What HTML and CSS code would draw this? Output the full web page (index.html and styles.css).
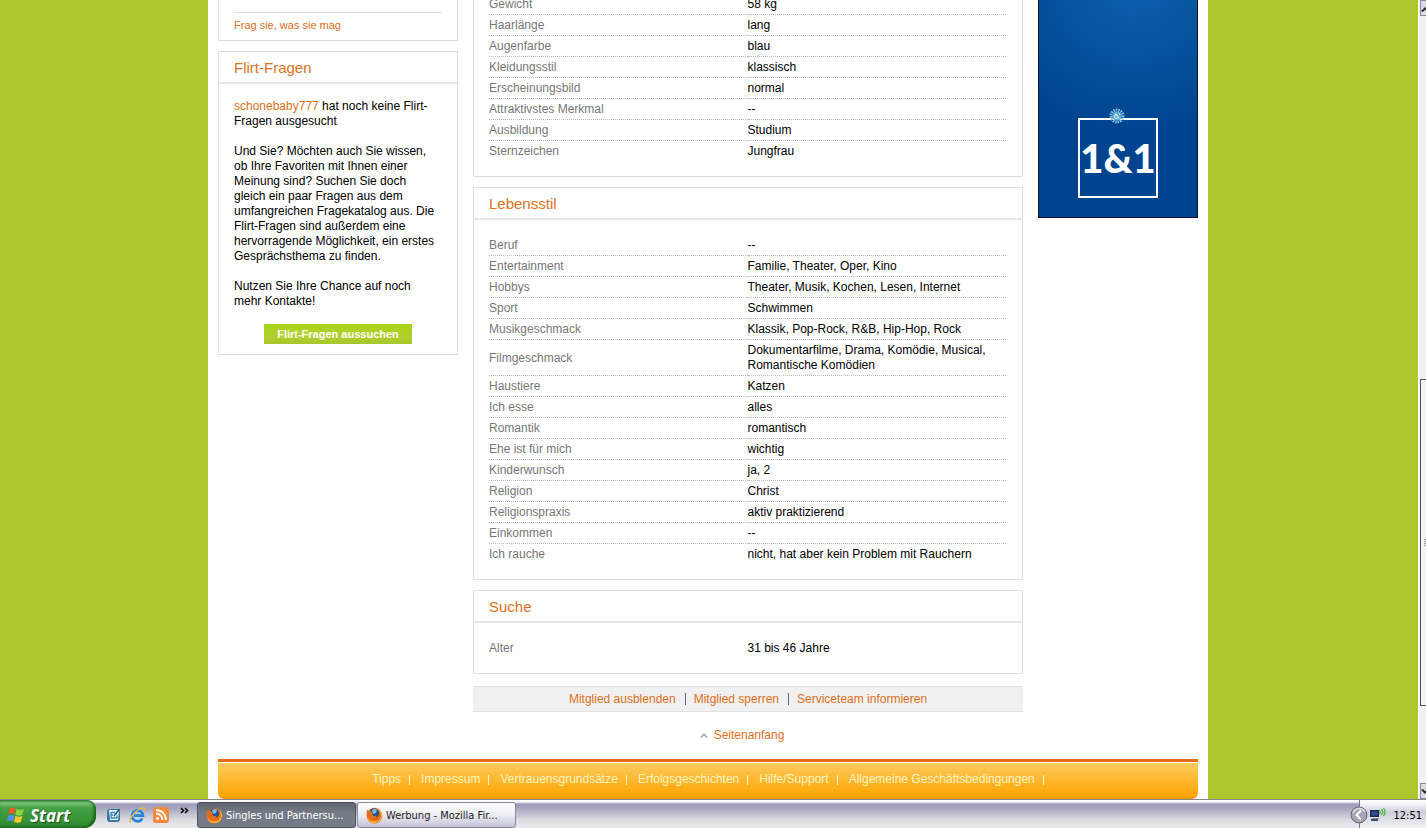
FILE: index.html
```html
<!DOCTYPE html>
<html lang="de">
<head>
    <meta charset="UTF-8">
    <meta name="viewport" content="width=device-width, initial-scale=1.0">
    <title>Singles und Partnersuche</title>
    <link rel="stylesheet" href="styles.css">
</head>
<body>
    <div class="viewport">
        <div class="canvas">
            <div class="page">
                <div class="columns">
                    <aside class="sidebar">
                        <div class="box box-questions">
                            <p class="ask"><a href="#">Frag sie, was sie mag</a></p>
                        </div>
                        <div class="box">
                            <h2>Flirt-Fragen</h2>
                            <div class="box-text">
                                <p><a href="#">schonebaby777</a> hat noch keine Flirt-Fragen ausgesucht</p>
                                <p>Und Sie? Möchten auch Sie wissen, ob Ihre Favoriten mit Ihnen einer Meinung sind? Suchen Sie doch gleich ein paar Fragen aus dem umfangreichen Fragekatalog aus. Die Flirt-Fragen sind außerdem eine hervorragende Möglichkeit, ein erstes Gesprächsthema zu finden.</p>
                                <p>Nutzen Sie Ihre Chance auf noch mehr Kontakte!</p>
                                <button class="btn" type="button">Flirt-Fragen aussuchen</button>
                            </div>
                        </div>
                    </aside>

                    <main class="content">
                        <section class="box">
                            <table class="facts">
                                <tr><th>Gewicht</th><td>58 kg</td></tr>
                                <tr><th>Haarlänge</th><td>lang</td></tr>
                                <tr><th>Augenfarbe</th><td>blau</td></tr>
                                <tr><th>Kleidungsstil</th><td>klassisch</td></tr>
                                <tr><th>Erscheinungsbild</th><td>normal</td></tr>
                                <tr><th>Attraktivstes Merkmal</th><td>--</td></tr>
                                <tr><th>Ausbildung</th><td>Studium</td></tr>
                                <tr><th>Sternzeichen</th><td>Jungfrau</td></tr>
                            </table>
                        </section>

                        <section class="box">
                            <h2>Lebensstil</h2>
                            <table class="facts">
                                <tr><th>Beruf</th><td>--</td></tr>
                                <tr><th>Entertainment</th><td>Familie, Theater, Oper, Kino</td></tr>
                                <tr><th>Hobbys</th><td>Theater, Musik, Kochen, Lesen, Internet</td></tr>
                                <tr><th>Sport</th><td>Schwimmen</td></tr>
                                <tr><th>Musikgeschmack</th><td>Klassik, Pop-Rock, R&amp;B, Hip-Hop, Rock</td></tr>
                                <tr><th>Filmgeschmack</th><td>Dokumentarfilme, Drama, Komödie, Musical, Romantische Komödien</td></tr>
                                <tr><th>Haustiere</th><td>Katzen</td></tr>
                                <tr><th>Ich esse</th><td>alles</td></tr>
                                <tr><th>Romantik</th><td>romantisch</td></tr>
                                <tr><th>Ehe ist für mich</th><td>wichtig</td></tr>
                                <tr><th>Kinderwunsch</th><td>ja, 2</td></tr>
                                <tr><th>Religion</th><td>Christ</td></tr>
                                <tr><th>Religionspraxis</th><td>aktiv praktizierend</td></tr>
                                <tr><th>Einkommen</th><td>--</td></tr>
                                <tr><th>Ich rauche</th><td>nicht, hat aber kein Problem mit Rauchern</td></tr>
                            </table>
                        </section>

                        <section class="box">
                            <h2>Suche</h2>
                            <table class="facts">
                                <tr><th>Alter</th><td>31 bis 46 Jahre</td></tr>
                            </table>
                        </section>

                        <div class="actions">
                            <a href="#">Mitglied ausblenden</a>
                            <a href="#">Mitglied sperren</a>
                            <a href="#">Serviceteam informieren</a>
                        </div>
                        <p class="to-top">
                            <svg width="8" height="5" viewBox="0 0 8 5"><path d="M1 4.5 4 1.2 7 4.5" fill="none" stroke="#a8a8a8" stroke-width="1.6"/></svg>
                            <a href="#">Seitenanfang</a>
                        </p>
                    </main>

                    <a class="ad" href="#">
                        <span class="ad-logo">1&amp;1
                            <svg class="ad-spark" width="16" height="16" viewBox="0 0 16 16">
                                <circle cx="8" cy="8" r="6" fill="none" stroke="#8cc4dc" stroke-width="3" stroke-dasharray="1.4 1"/>
                                <circle cx="8" cy="8" r="4.6" fill="#5fb2d6"/>
                                <path d="M5 9.5 7 6l2 2 2-2.500M6.500 10.500l3.500-1" fill="none" stroke="#d4f3f8" stroke-width="1.200"/>
                                <path d="M8 5.500 10.500 8" stroke="#176fa5" stroke-width="1"/>
                            </svg>
                        </span>
                    </a>
                </div>

                <footer class="footer">
                    <nav>
                        <a href="#">Tipps</a>
                        <a href="#">Impressum</a>
                        <a href="#">Vertrauensgrundsätze</a>
                        <a href="#">Erfolgsgeschichten</a>
                        <a href="#">Hilfe/Support</a>
                        <a href="#">Allgemeine Geschäftsbedingungen</a>
                    </nav>
                </footer>
            </div>
        </div>

        <div class="scrollbar">
            <div class="scroll-btn"><svg width="6" height="6" viewBox="0 0 6 6"><path d="M0 5 4 1l2 2v2L4 4 2 6z" fill="#333"/></svg></div>
            <div class="track-above"></div>
            <div class="thumb"><span></span><span></span><span></span><span></span></div>
            <div class="track-below"></div>
            <div class="scroll-btn"><svg width="6" height="6" viewBox="0 0 6 6"><path d="M0 1 4 5l2-2V1L4 2 2 0z" fill="#333"/></svg></div>
        </div>
    </div>

    <div class="taskbar">
        <button class="start" type="button">
            <svg width="18" height="18" viewBox="0 0 17 17">
                <path d="M2.500 2.500Q5 .6 8 2.200L7 7.600Q4 6.500 1.300 8z" fill="#ef5b25"/>
                <path d="M9 2.700Q12 4.300 15.800 2.700L14.600 8.200Q11 9.700 8 8.200z" fill="#8ed43c"/>
                <path d="M1.100 9.200Q4 7.700 6.800 8.900L5.800 14.300Q3 12.800 0 14.500z" fill="#4e8ef7"/>
                <path d="M7.800 9.400Q11 10.800 14.400 9.500L13.200 15Q10 16.500 6.800 14.800z" fill="#fcc72c"/>
            </svg>
            Start
        </button>
        <div class="quick">
            <svg width="16" height="16" viewBox="0 0 16 16">
                <rect x="1" y="2" width="13" height="13" rx="3" fill="#39789f"/>
                <path d="M3 3h10l-1 10H4z" fill="#eaf7fc"/>
                <path d="M5 5.500h4M5 8h2M5 5v6h6V8.500" fill="none" stroke="#3d84b4" stroke-width="1.300"/>
                <path d="M8 9l5.500-7" stroke="#2c5f92" stroke-width="1.800"/>
            </svg>
            <svg width="17" height="17" viewBox="0 0 17 17">
                <path d="M13.300 11.500A5.500 5.500 0 1 1 14 8.700H5" fill="none" stroke="#2187dc" stroke-width="2.700"/>
                <path d="M2 15.500C-1 13.500 4 6 9 3s8-3 6.500 1" fill="none" stroke="#e7b73a" stroke-width="1.400"/>
            </svg>
            <svg width="16" height="16" viewBox="0 0 16 16">
                <rect width="16" height="16" rx="3" fill="#f58a3c"/>
                <circle cx="4.500" cy="11.500" r="1.600" fill="#fff"/>
                <path d="M3 6.500a6.500 6.500 0 0 1 6.500 6.500M3 3a10 10 0 0 1 10 10" fill="none" stroke="#fff" stroke-width="1.800"/>
            </svg>
            <svg class="more" width="9" height="7" viewBox="0 0 9 7"><path d="M1 1l2.500 2.500L1 6M5 1l2.500 2.500L5 6" fill="none" stroke="#000" stroke-width="1.500"/></svg>
        </div>
        <button class="task active" type="button">
            <svg width="17" height="17" viewBox="0 0 17 17"><use href="#firefox"/></svg>
            Singles und Partnersu...
        </button>
        <button class="task" type="button">
            <svg width="17" height="17" viewBox="0 0 17 17">
                <g id="firefox">
                    <circle cx="8.500" cy="8" r="7.200" fill="#e66b18"/>
                    <circle cx="8" cy="6.500" r="5" fill="#24508f"/>
                    <path d="M6 3q3-2 5 0l-1 3-3 1z" fill="#79bfe9"/>
                    <path d="M1 3Q3 4 5 4.200L7 6 6 7.500 8 9l3-.5Q10 12 7 11q4 3 6.500-1Q15 7 13 2.500 17 6 16.200 10 14.500 16.500 8.500 16.500 1.500 16 .7 9.500.4 6 1 3z" fill="#e66b18"/>
                    <path d="M1.500 10q2.500 5 7.500 4.500t6.200-6q.5 7-6.700 7.500-6 0-7-6z" fill="#fbbd2f"/>
                    <path d="M13.500 3q3.500 4 1.700 8-.2-4-1.700-8z" fill="#ffd84c"/>
                </g>
            </svg>
            Werbung - Mozilla Fir...
        </button>
        <div class="tray">
            <svg class="tray-arrow" width="18" height="18" viewBox="0 0 18 18">
                <circle cx="9" cy="9" r="8" fill="#a5a5b6" stroke="#686878"/>
                <path d="M3 7a6.500 6.500 0 0 1 12-1" fill="none" stroke="#dedee6" stroke-width="1.500"/>
                <path d="M11 4.500 6.500 9l4.500 4.500" fill="none" stroke="#fff" stroke-width="2"/>
            </svg>
            <svg width="17" height="16" viewBox="0 0 17 16">
                <path d="M1 3h9v7H1z" fill="#20294d"/>
                <path d="M2.500 4.500h6v4h-6z" fill="#314e95"/>
                <path d="M3 11h7l-1 3H2z" fill="#8790a8"/>
                <path d="M2 13h7" stroke="#2d3558" stroke-width="1.500"/>
                <path d="M10.500 3q1.500 2 0 4M12.500 2q2.500 3 0 6M14.500 1q3 4 0 8" fill="none" stroke="#36ba36" stroke-width="1.200"/>
            </svg>
            <span>12:51</span>
        </div>
    </div>
</body>
</html>
```
FILE: styles.css
```css
* {
    box-sizing: border-box;
}
body {
    margin: 0;
    height: 100vh;
    display: flex;
    flex-direction: column;
    overflow: hidden;
    font-family: "Liberation Sans", Arial, sans-serif;
    font-size: 12px;
    line-height: 15px;
    color: #000;
}
a {
    color: #e0701c;
    text-decoration: none;
}
p {
    margin: 0;
}
button {
    border: 0;
    cursor: pointer;
}
.viewport {
    flex: 1;
    min-height: 0;
    display: flex;
    overflow: hidden;
}
.canvas {
    flex: 1;
    padding-right: 2px;
    background-color: #aec72f;
}
.page {
    max-width: 1000px;
    min-height: 100%;
    margin: 0 auto;
    padding: 0 10px;
    background-color: #fff;
}

/* the page is scrolled down, the first boxes are cut off */
.columns {
    display: flex;
    align-items: flex-start;
    gap: 15px;
    margin-top: -22px;
}
.sidebar {
    flex: 0 0 240px;
}
.content {
    flex: 1;
}

.box {
    margin-bottom: 10px;
    border: 1px solid #dedede;
}
.box h2 {
    margin: 0;
    padding: 2px 15px 0;
    border-bottom: 2px solid #e6e6e6;
    font-size: 15px;
    font-weight: normal;
    line-height: 28px;
    color: #e0701c;
}
.box-questions {
    padding: 33px 15px 7px;
}
.ask {
    padding-top: 5px;
    border-top: 1px solid #dedede;
    font-size: 11px;
}
.box-text {
    padding: 15px 15px 10px;
}
.box-text p {
    margin-bottom: 15px;
    padding-right: 5px;
}
.btn {
    display: block;
    margin: 0 auto;
    padding: 0 13px;
    height: 20px;
    background: linear-gradient(#a9d518, #b3cf2c 60%, #a6c62c);
    color: #fff;
    font: bold 11px "Liberation Sans", Arial, sans-serif;
}

.facts {
    width: calc(100% - 31px);
    margin: 15px 16px 15px 15px;
    border-collapse: separate;
    border-spacing: 0;
    table-layout: fixed;
}
.facts th,
.facts td {
    padding: 3px 0 2px;
    border-bottom: 1px dotted #bcbcbc;
    text-align: left;
    font-weight: normal;
    vertical-align: middle;
}
.facts th {
    width: 50%;
    color: #777;
}
.facts tr:last-child th,
.facts tr:last-child td {
    border-bottom: 0;
}

.actions {
    display: flex;
    justify-content: center;
    align-items: center;
    height: 26px;
    margin-top: 12px;
    background-color: #f1f1f1;
    border: solid #e0e0e0;
    border-width: 1px 0;
}
.actions a + a {
    margin-left: 9px;
    padding-left: 8px;
    border-left: 1px solid #5c6670;
    line-height: 12px;
}
.to-top {
    display: flex;
    justify-content: center;
    align-items: center;
    gap: 6px;
    padding: 16px 12px 16px 0;
}

.ad {
    flex: 0 0 160px;
    height: 240px;
    padding-top: 139px;
    border: 1px solid #05142c;
    background: radial-gradient(circle at 60% 0, #0b61ad, #00448f 60%);
}
.ad-logo {
    position: relative;
    display: block;
    width: 80px;
    height: 80px;
    margin: 0 auto;
    border: 2px solid #fff;
    color: #fff;
    font: 900 40px/76px Lato, sans-serif;
    text-align: center;
    white-space: nowrap;
}
.ad-spark {
    position: absolute;
    top: -12px;
    left: 29px;
}

.footer {
    padding-bottom: 1px;
    border-top: 3px solid #e26a19;
}
.footer nav {
    display: flex;
    justify-content: center;
    margin-top: 1px;
    padding: 9px 0 12px;
    border-radius: 0 0 6px 6px;
    background: linear-gradient(#ffcb60, #fda602 90%, #f59a00);
}
.footer a {
    display: flex;
    align-items: center;
    color: #fff3c0;
}
.footer a + a {
    margin-left: 11px;
}
.footer a::after {
    content: "";
    width: 1px;
    height: 10px;
    margin-left: 8px;
    background-color: #fff3c0;
}

.scrollbar {
    flex: 0 0 8px;
    min-width: 0;
    display: flex;
    flex-direction: column;
    overflow: hidden;
    padding-left: 1px;
    border-left: 1px solid #fff;
    background-color: #f0f0f7;
}
.scroll-btn {
    flex: 0 0 16px;
    padding-top: 4px;
    overflow: hidden;
    border: solid #8a8a9c;
    border-width: 1px 0 1px 1px;
    background-color: #dcdce8;
    line-height: 6px;
}
.track-above {
    flex: 364;
}
.track-below {
    flex: 77;
}
.thumb {
    flex: 326;
    display: flex;
    flex-direction: column;
    justify-content: center;
    align-items: flex-end;
    gap: 1px;
    border: solid #55555f;
    border-width: 1px 0 1px 1px;
    background-color: #f3f3fb;
}
.thumb span {
    width: 2px;
    height: 1px;
    background-color: #99a;
}

.taskbar {
    flex: 0 0 29px;
    display: flex;
    align-items: stretch;
    border-top: 1px solid #85858f;
    background: linear-gradient(#fff 0, #f4f4f8 2px, #9c9cb9 4px, #a9a9c2 9px, #dddde3 20px, #e9e9ed);
    font-family: "DejaVu Sans Condensed", Tahoma, sans-serif;
    font-size: 11px;
}
.start {
    flex: 0 0 96px;
    display: flex;
    align-items: center;
    gap: 5px;
    padding: 2px 0 0 7px;
    border-radius: 0 9px 12px 0;
    background: linear-gradient(#2f7c2f 0, #75c175 3px, #45a045 8px, #359435 20px, #2c842c);
    box-shadow: inset -2px -1px 3px #1b5e1b;
    color: #fff;
    font: italic bold 17px "Open Sans", sans-serif;
    text-shadow: 1px 1px 1px #1d4f1d;
}
.quick {
    flex: 0 0 101px;
    display: flex;
    align-items: center;
    gap: 7px;
    padding: 2px 0 0 10px;
}
.more {
    margin: 0 0 10px 4px;
}
.task {
    flex: 0 0 159px;
    display: flex;
    align-items: center;
    gap: 3px;
    height: 26px;
    margin: 2px 1px 0 0;
    padding: 0 8px;
    border: 1px solid #8a8a9e;
    border-radius: 3px;
    background: linear-gradient(#fff, #ececf4 50%, #c3c3d8);
    color: #222;
    font: inherit;
    white-space: nowrap;
}
.task.active {
    border-color: #4c515b;
    background: linear-gradient(#5f646e, #747b86 40%, #747b86);
    color: #fff;
}
.tray {
    display: flex;
    align-items: center;
    gap: 1px;
    margin-left: auto;
    padding: 2px 4px 0 0;
    border-left: 1px solid #77778c;
    background: linear-gradient(#fff, #f0f0f5 5px, #cfcfdc 12px, #f1f1f4);
}
.tray-arrow {
    margin-left: -10px;
}
.tray span {
    margin-left: 6px;
}
```
